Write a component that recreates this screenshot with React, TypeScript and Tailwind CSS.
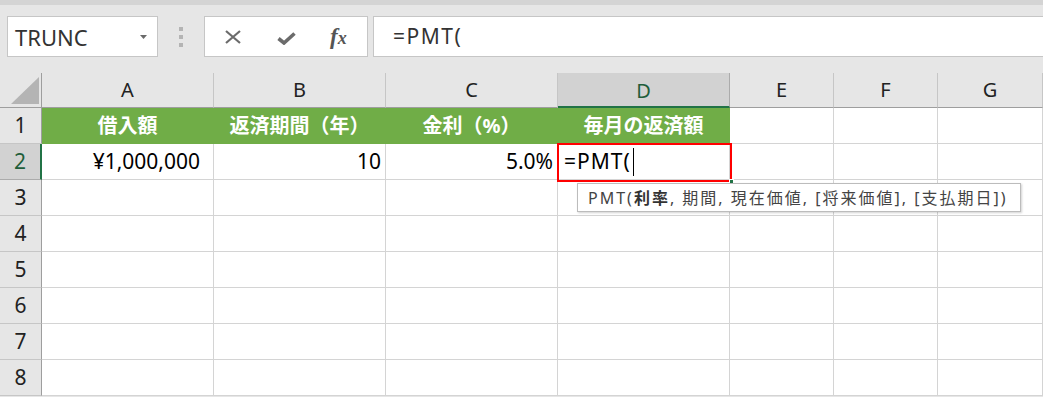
import React from 'react';

const COLS = ['A', 'B', 'C', 'D', 'E', 'F', 'G'];
const ROWS = [1, 2, 3, 4, 5, 6, 7, 8];

const HEADERS = ['借入額', '返済期間（年）', '金利（%）', '毎月の返済額'];

const font = "font-['Noto_Sans','Noto_Sans_CJK_JP',sans-serif]";

function cellContent(row: number, col: number) {
  if (row === 1 && col < 4) {
    return (
      <span className="w-full text-center text-[20px] font-bold text-white leading-none">
        {HEADERS[col]}
      </span>
    );
  }
  if (row === 2) {
    if (col === 0) return <span className="w-full text-right pr-[13px] text-[21px] leading-none text-black">¥1,000,000</span>;
    if (col === 1) return <span className="w-full text-right pr-[4px] text-[21px] leading-none text-black">10</span>;
    if (col === 2) return <span className="w-full text-right pr-[4px] text-[21px] leading-none text-black">5.0%</span>;
    if (col === 3)
      return (
        <span className="w-full pl-[6px] text-[21px] leading-none text-black flex items-center tracking-[1px]">
          =PMT(
          <span className="inline-block w-px h-[28px] bg-black ml-[2px]" />
        </span>
      );
  }
  return null;
}

export default function App() {
  return (
    <div className={`w-[1043px] h-[397px] overflow-hidden bg-[#e6e6e6] ${font}`}>
      {/* window top strip */}
      <div className="h-[5px] bg-[#d4d4d4]" />
      <div className="h-[11px]" />

      {/* name box + formula bar */}
      <div className="flex h-[41px] pl-[7px]">
        <div className="w-[151px] bg-white border border-[#c6c6c6] flex items-center pl-[7px] pr-[10px]">
          <span className="text-[22px] text-[#333] leading-none flex-1">TRUNC</span>
          <svg width="7" height="4" viewBox="0 0 7 4">
            <path d="M0 0 L7 0 L3.5 4 Z" fill="#6a6a6a" />
          </svg>
        </div>
        <div className="w-[46px] flex flex-col items-center justify-center gap-[4px]">
          <span className="w-[4px] h-[4px] bg-[#b4b4b4]" />
          <span className="w-[4px] h-[4px] bg-[#b4b4b4]" />
          <span className="w-[4px] h-[4px] bg-[#b4b4b4]" />
        </div>
        <div className="w-[164px] bg-white border border-[#c6c6c6] flex items-center pl-[19px]">
          <svg width="18" height="14" viewBox="0 0 18 14">
            <path d="M2 1 L16 13 M16 1 L2 13" stroke="#6b6b6b" strokeWidth="2.2" />
          </svg>
          <svg width="19" height="13" viewBox="0 0 19 13" className="ml-[35px] mt-[4px]">
            <path d="M1.5 6.5 L7 11 L17.5 1.5" stroke="#6b6b6b" strokeWidth="3.6" fill="none" />
          </svg>
          <span className="ml-[34px] font-['Liberation_Serif',serif] italic font-bold text-[23px] text-[#555] leading-none">
            <span>f</span>
            <span className="text-[18px]">x</span>
          </span>
        </div>
        <div className="w-[5px]" />
        <div className="flex-1 bg-white border border-r-0 border-[#c6c6c6] flex items-center pl-[19px]">
          <span className="text-[21px] text-[#333] leading-none tracking-[1.5px]">=PMT(</span>
        </div>
      </div>

      <div className="h-[16px]" />

      {/* sheet grid */}
      <div className="relative bg-white">
        <div className="grid grid-cols-[42px_172px_172px_172px_172px_104px_104px_105px] grid-rows-[35px_repeat(8,36px)]">
          {/* corner */}
          <div className="bg-[#e6e6e6] border-r border-b border-[#9e9e9e] flex items-end justify-end pr-[2px] pb-[3px]">
            <svg width="28" height="27" viewBox="0 0 28 27">
              <path d="M28 0 L28 27 L0 27 Z" fill="#b4b4b4" />
            </svg>
          </div>
          {COLS.map((c) =>
            c === 'D' ? (
              <div
                key={c}
                className="bg-[#d2d2d2] border-r border-[#ababab] border-b-2 border-b-[#217346] flex items-center justify-center text-[20px] text-[#1f5e3a] leading-none pt-[2px]"
              >
                {c}
              </div>
            ) : (
              <div
                key={c}
                className="bg-[#e6e6e6] border-r border-[#c6c6c6] border-b border-b-[#9e9e9e] flex items-center justify-center text-[20px] text-[#222] leading-none"
              >
                {c}
              </div>
            )
          )}

          {ROWS.map((r) => (
            <React.Fragment key={r}>
              {r === 2 ? (
                <div className="bg-[#d2d2d2] border-r-2 border-[#217346] border-b border-b-[#ababab] flex items-center justify-center text-[21px] text-[#1f5e3a] leading-none">
                  {r}
                </div>
              ) : (
                <div className="bg-[#e6e6e6] border-r border-[#9e9e9e] border-b border-b-[#c6c6c6] flex items-center justify-center text-[21px] text-[#222] leading-none">
                  {r}
                </div>
              )}
              {COLS.map((c, ci) => {
                const green = r === 1 && ci < 4;
                return (
                  <div
                    key={c}
                    className={`flex items-center border-r border-b ${
                      green ? 'bg-[#70ad47] border-[#70ad47]' : 'bg-white border-[#d4d4d4]'
                    }`}
                  >
                    {cellContent(r, ci)}
                  </div>
                );
              })}
            </React.Fragment>
          ))}
        </div>

        {/* active cell border D2 */}
        <div className="absolute left-[557px] top-[70px] w-[175px] h-[39px] border-2 border-[#ff0000] pointer-events-none" />
        <div className="absolute left-[729px] top-[106px] w-[5px] h-[5px] bg-[#217346] border border-white" />

        {/* function tooltip */}
        <div className="absolute left-[577px] top-[110px] w-[444px] h-[29px] bg-white border border-[#bcbcbc] shadow-[1px_1px_2px_rgba(0,0,0,0.18)] flex items-center pl-[10px] text-[16px] tracking-[2px] text-[#444] leading-none whitespace-nowrap">
          <span>PMT(</span>
          <span className="font-bold text-[#333]">利率</span>
          <span>, 期間, 現在価値, [将来価値], [支払期日])</span>
        </div>
      </div>
    </div>
  );
}
